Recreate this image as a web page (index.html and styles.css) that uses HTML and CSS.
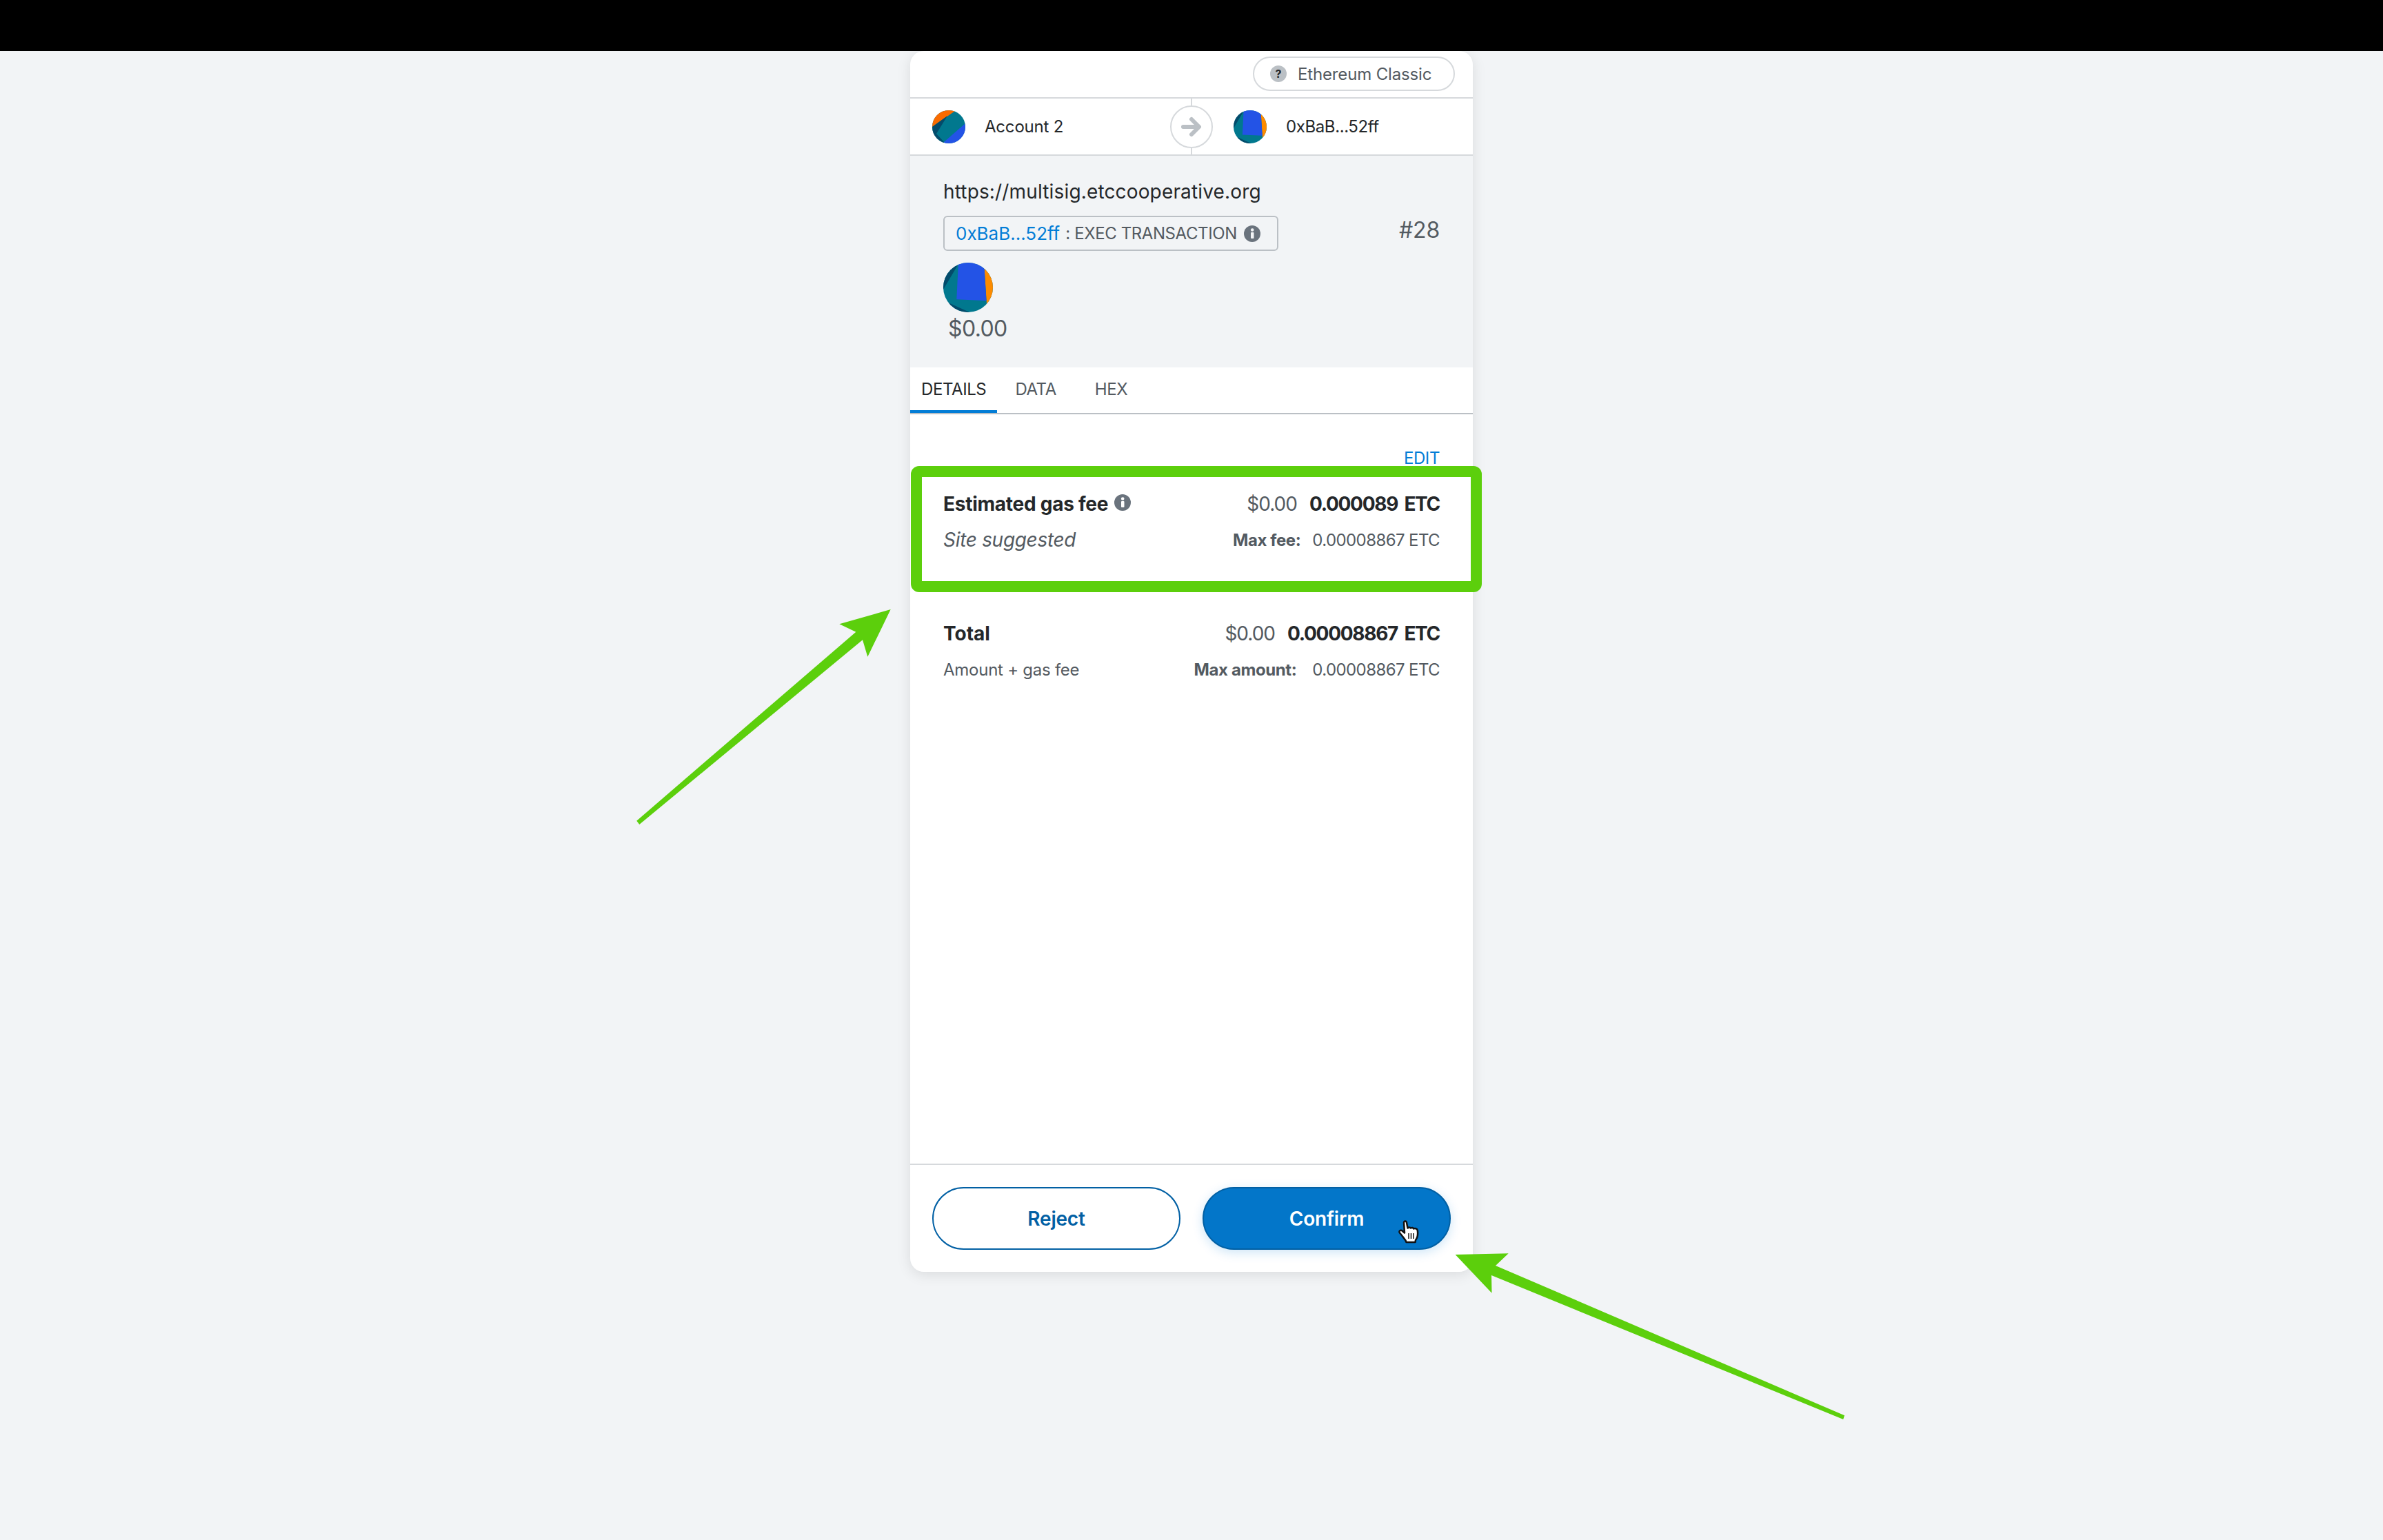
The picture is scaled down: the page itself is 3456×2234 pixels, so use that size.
FILE: index.html
```html
<!DOCTYPE html>
<html lang="en">
<head>
<meta charset="utf-8">
<title>Confirm transaction</title>
<link rel="stylesheet" href="styles.css">
</head>
<body>
<div class="page">
  <div class="topbar"></div>
  <main class="stage">
    <section class="card">
      <div class="network-row">
        <div class="network-pill">
          <span class="question-icon">?</span>
          <span class="network-name">Ethereum Classic</span>
        </div>
      </div>

      <div class="accounts">
        <div class="party party-from">
          <svg class="avatar avatar-small" viewBox="0 0 48 48">
            <rect width="48" height="48" fill="#01788e"/>
            <polygon points="0,0 35,0 33,1 0,24" fill="#f96b00"/>
            <polygon points="0,24 22,8 6,34 17,46 17,48 0,48" fill="#034b6b"/>
            <polygon points="17,46 48,19 48,48 17,48" fill="#2353e6"/>
          </svg>
          <span class="party-name">Account 2</span>
        </div>
        <div class="party party-to">
          <svg class="avatar avatar-small" viewBox="0 0 72 72">
            <rect width="72" height="72" fill="#01788e"/>
            <polygon points="0,39 21,3.500 21,0 0,0" fill="#034b6b"/>
            <polygon points="6.700,57.700 38,72 0,72" fill="#034b6b"/>
            <polygon points="59,0 72,0 72,60 63,60" fill="#fd8b00"/>
            <polygon points="22,-2 59,-2 62.500,55.300 19.300,53.300" fill="#2353e6"/>
          </svg>
          <span class="party-name party-address">0xBaB...52ff</span>
        </div>
        <div class="arrow-badge">
          <svg class="arrow-icon" viewBox="0 0 30 30"><path d="M3 15H25M15 4L26 15L15 26"/></svg>
        </div>
      </div>

      <div class="summary">
        <div class="origin">https://multisig.etccooperative.org</div>
        <div class="method-row">
          <div class="method">
            <span class="method-address">0xBaB...52ff</span>
            <span class="method-colon">:</span>
            <span class="method-name">EXEC TRANSACTION</span>
            <svg class="info-icon" viewBox="0 0 24 24"><circle cx="12" cy="12" r="12"/><rect class="info-mark" x="10" y="10" width="4.500" height="9" rx="1"/><circle class="info-mark" cx="12.200" cy="6.500" r="2.300"/></svg>
          </div>
          <div class="nonce">#28</div>
        </div>
        <svg class="avatar avatar-large" viewBox="0 0 72 72">
          <rect width="72" height="72" fill="#01788e"/>
          <polygon points="0,39 21,3.500 21,0 0,0" fill="#034b6b"/>
          <polygon points="6.700,57.700 38,72 0,72" fill="#034b6b"/>
          <polygon points="59,0 72,0 72,60 63,60" fill="#fd8b00"/>
          <polygon points="22,-2 59,-2 62.500,55.300 19.300,53.300" fill="#2353e6"/>
        </svg>
        <div class="amount">$0.00</div>
      </div>

      <nav class="tabs">
        <span class="tab tab-active">DETAILS</span>
        <span class="tab tab-data">DATA</span>
        <span class="tab">HEX</span>
      </nav>

      <div class="details">
        <div class="edit-row"><span class="edit">EDIT</span></div>
        <div class="fee-block">
          <div class="highlight"></div>
          <div class="row row-main">
            <div class="row-label">
              <span class="title fee-title">Estimated gas fee</span>
              <svg class="info-icon info-title" viewBox="0 0 24 24"><circle cx="12" cy="12" r="12"/><rect class="info-mark" x="10" y="10" width="4.500" height="9" rx="1"/><circle class="info-mark" cx="12.200" cy="6.500" r="2.300"/></svg>
            </div>
            <div class="values">
              <span class="fiat">$0.00</span>
              <span class="crypto crypto-fee">0.000089 ETC</span>
            </div>
          </div>
          <div class="row row-sub">
            <span class="site-suggested">Site suggested</span>
            <div class="values">
              <span class="max-label max-fee">Max fee:</span>
              <span class="max-value">0.00008867 ETC</span>
            </div>
          </div>
        </div>
        <div class="total-block">
          <div class="row row-main">
            <span class="title total-title">Total</span>
            <div class="values">
              <span class="fiat">$0.00</span>
              <span class="crypto crypto-total">0.00008867 ETC</span>
            </div>
          </div>
          <div class="row row-sub">
            <span class="amount-note">Amount + gas fee</span>
            <div class="values">
              <span class="max-label max-amount">Max amount:</span>
              <span class="max-value">0.00008867 ETC</span>
            </div>
          </div>
        </div>
      </div>

      <footer class="actions">
        <button class="btn btn-reject">Reject</button>
        <button class="btn btn-confirm">Confirm
          <svg class="cursor" viewBox="0 0 30 34">
            <path class="cursor-hand" d="M8 3.500C8.500 .8 11.500 1 12 3.500L13.500 11.500C15 10 17 10 18 11.500C19.500 10.500 21.500 10.800 22 12.500C24 11.500 27.500 12 27.800 15C28.500 20 27.500 26 25 29L24.500 32H11.500L10.500 29.500C8 26 5 22 2 18.500C0.500 16.500 2.500 13.800 5 15L9 18.500Z"/>
            <path class="cursor-lines" d="M15 19V27M18.500 19V27M22 19V27"/>
          </svg>
        </button>
      </footer>
    </section>
  </main>
  <svg class="annotations" viewBox="0 0 3456 2234">
    <polygon points="923.300,1190.700 1241.300,916.700 1217.300,905.300 1291.700,884 1258.300,952.700 1251,928.300 927.300,1196"/>
    <polygon points="2675,2053.300 2169,1836 2187.700,1818.300 2110.600,1820 2163.500,1875.700 2163,1850 2673.200,2059"/>
  </svg>
</div>
</body>
</html>
```
FILE: styles.css
```css
* { box-sizing: border-box; }
html, body { margin: 0; padding: 0; }
body {
  background: #f2f4f6;
  color: #24272a;
  font-family: Inter, "Noto Sans", sans-serif;
  font-size: 24px;
}
.page { position: relative; width: 3456px; height: 2234px; overflow: hidden; }
.topbar { height: 74px; background: #000; }
.stage { display: flex; justify-content: center; }

.card {
  position: relative;
  display: flex;
  flex-direction: column;
  width: 816px;
  height: 1771px;
  background: #fff;
  border-radius: 20px;
  box-shadow: 0 4px 20px rgba(0, 0, 0, .1);
}

.network-row {
  display: flex;
  justify-content: flex-end;
  align-items: flex-start;
  height: 69px;
  padding: 8px 26px 0 0;
  border-bottom: 2px solid #d6d9dc;
}
.network-pill {
  display: flex;
  align-items: center;
  width: 293px;
  height: 50px;
  padding-left: 23px;
  border: 2px solid #d6d9dc;
  border-radius: 25px;
}
.question-icon {
  display: flex;
  align-items: center;
  justify-content: center;
  width: 24px;
  height: 24px;
  margin-right: 16px;
  border-radius: 50%;
  background: #bbc0c5;
  color: #24272a;
  font-size: 16px;
  font-weight: 700;
}
.network-name { color: #535a61; font-size: 24px; letter-spacing: -.15px; white-space: nowrap; }

.accounts {
  position: relative;
  display: flex;
  height: 83px;
  border-bottom: 2px solid #d6d9dc;
}
.accounts::before {
  content: "";
  position: absolute;
  left: 407px;
  top: 0;
  bottom: 0;
  width: 2px;
  background: #d6d9dc;
}
.party { display: flex; align-items: center; flex: 0 0 408px; height: 81px; }
.party-from { padding-left: 32px; }
.party-to { padding-left: 61px; }
.party-name { margin-left: 28px; font-size: 24px; letter-spacing: -.2px; white-space: nowrap; }
.party-address { letter-spacing: -.4px; }
.avatar { display: block; border-radius: 50%; overflow: hidden; flex: none; }
.avatar-small { width: 48px; height: 48px; }
.avatar-large { width: 72px; height: 72px; margin-top: 17px; }
.arrow-badge {
  position: absolute;
  left: 377px;
  top: 10px;
  display: flex;
  align-items: center;
  justify-content: center;
  width: 62px;
  height: 62px;
  background: #fff;
  border: 2px solid #d6d9dc;
  border-radius: 50%;
}
.arrow-icon { width: 30px; height: 30px; fill: none; stroke: #bbc0c5; stroke-width: 6; stroke-linecap: round; stroke-linejoin: round; }

.summary {
  height: 307px;
  padding: 34px 48px 0;
  background: #f2f4f6;
}
.origin { height: 36px; font-size: 28px; line-height: 36px; letter-spacing: .15px; white-space: nowrap; }
.method-row { display: flex; justify-content: space-between; align-items: flex-start; margin-top: 17px; }
.method {
  display: flex;
  align-items: center;
  width: 486px;
  height: 51px;
  padding-left: 16px;
  background: #f2f4f6;
  border: 2px solid #bbc0c5;
  border-radius: 6px;
  white-space: nowrap;
}
.method-address { color: #037dd6; font-size: 26px; letter-spacing: 0; }
.method-colon { margin-left: 8px; color: #535a61; font-size: 24px; }
.method-name { margin-left: 6px; color: #535a61; font-size: 24px; letter-spacing: -.4px; }
.info-icon { display: block; flex: none; width: 24px; height: 24px; margin-left: 10px; fill: #6a737d; }
.info-mark { fill: #f2f4f6; }
.details .info-mark { fill: #fff; }
.nonce { height: 40px; margin-top: 1px; color: #535a61; font-size: 32px; line-height: 40px; letter-spacing: -.2px; }
.amount { margin: 4px 0 0 7px; height: 40px; color: #535a61; font-size: 32px; line-height: 40px; letter-spacing: -.6px; }

.tabs {
  display: flex;
  gap: 10px;
  flex: none;
  height: 68px;
  border-bottom: 2px solid #bbc0c5;
}
.tab {
  height: 66px;
  padding: 17px 16px 0;
  color: #535a61;
  font-size: 24px;
  line-height: 30px;
  letter-spacing: -.4px;
}
.tab-active { color: #24272a; border-bottom: 4px solid #037dd6; }
.tab-data { margin-right: 14px; }

.details { flex: 1; padding: 0 48px; }
.edit-row { display: flex; justify-content: flex-end; height: 32px; margin-top: 48px; }
.edit { color: #037dd6; font-size: 24px; line-height: 32px; letter-spacing: -.4px; }
.fee-block { position: relative; margin-top: 32px; }
.total-block { margin-top: 100px; }
.highlight {
  position: absolute;
  left: -47px;
  right: -61px;
  top: -37px;
  bottom: -58px;
  border: 16px solid #5ccf0c;
  border-radius: 12px;
}
.row { display: flex; justify-content: space-between; align-items: center; height: 36px; white-space: nowrap; }
.row-sub { margin-top: 16px; }
.row-label { display: flex; align-items: center; }
.title { font-size: 28px; font-weight: 700; }
.fee-title { letter-spacing: -.25px; }
.info-title { margin: -4px 0 0 9px; }
.values { display: flex; align-items: center; }
.fiat { color: #535a61; font-size: 28px; letter-spacing: -1px; }
.crypto { margin-left: 18px; font-size: 28px; font-weight: 700; letter-spacing: -1.300px; word-spacing: 4px; }
.site-suggested { color: #535a61; font-size: 28px; font-style: italic; letter-spacing: -.3px; }
.amount-note { color: #535a61; font-size: 24px; letter-spacing: -.25px; }
.max-label { color: #535a61; font-size: 24px; font-weight: 700; letter-spacing: -.4px; }
.max-fee { margin-right: 17px; }
.max-amount { margin-right: 23px; }
.max-value { color: #535a61; font-size: 24px; letter-spacing: -.6px; }

.actions {
  display: flex;
  gap: 32px;
  flex: none;
  padding: 32px;
  border-top: 2px solid #d6d9dc;
}
.btn {
  position: relative;
  flex: 1;
  height: 91px;
  padding: 0;
  border-radius: 46px;
  font-family: Inter, "Noto Sans", sans-serif;
  font-size: 28px;
  font-weight: 600;
  letter-spacing: -.2px;
}
.btn-reject { background: #fff; border: 2px solid #0260a4; color: #0260a4; }
.btn-confirm {
  background: #0376c9;
  border: 2px solid #0260a4;
  color: #fff;
  box-shadow: 0 4px 16px rgba(3, 125, 214, .2);
}
.cursor { position: absolute; left: 282px; top: 46px; width: 30px; height: 34px; }
.cursor-hand { fill: #fff; stroke: #111; stroke-width: 2.500; stroke-linejoin: round; }
.cursor-lines { fill: none; stroke: #222; stroke-width: 1.600; }

.annotations { position: absolute; inset: 0; width: 3456px; height: 2234px; fill: #5ccf0c; pointer-events: none; }
```
